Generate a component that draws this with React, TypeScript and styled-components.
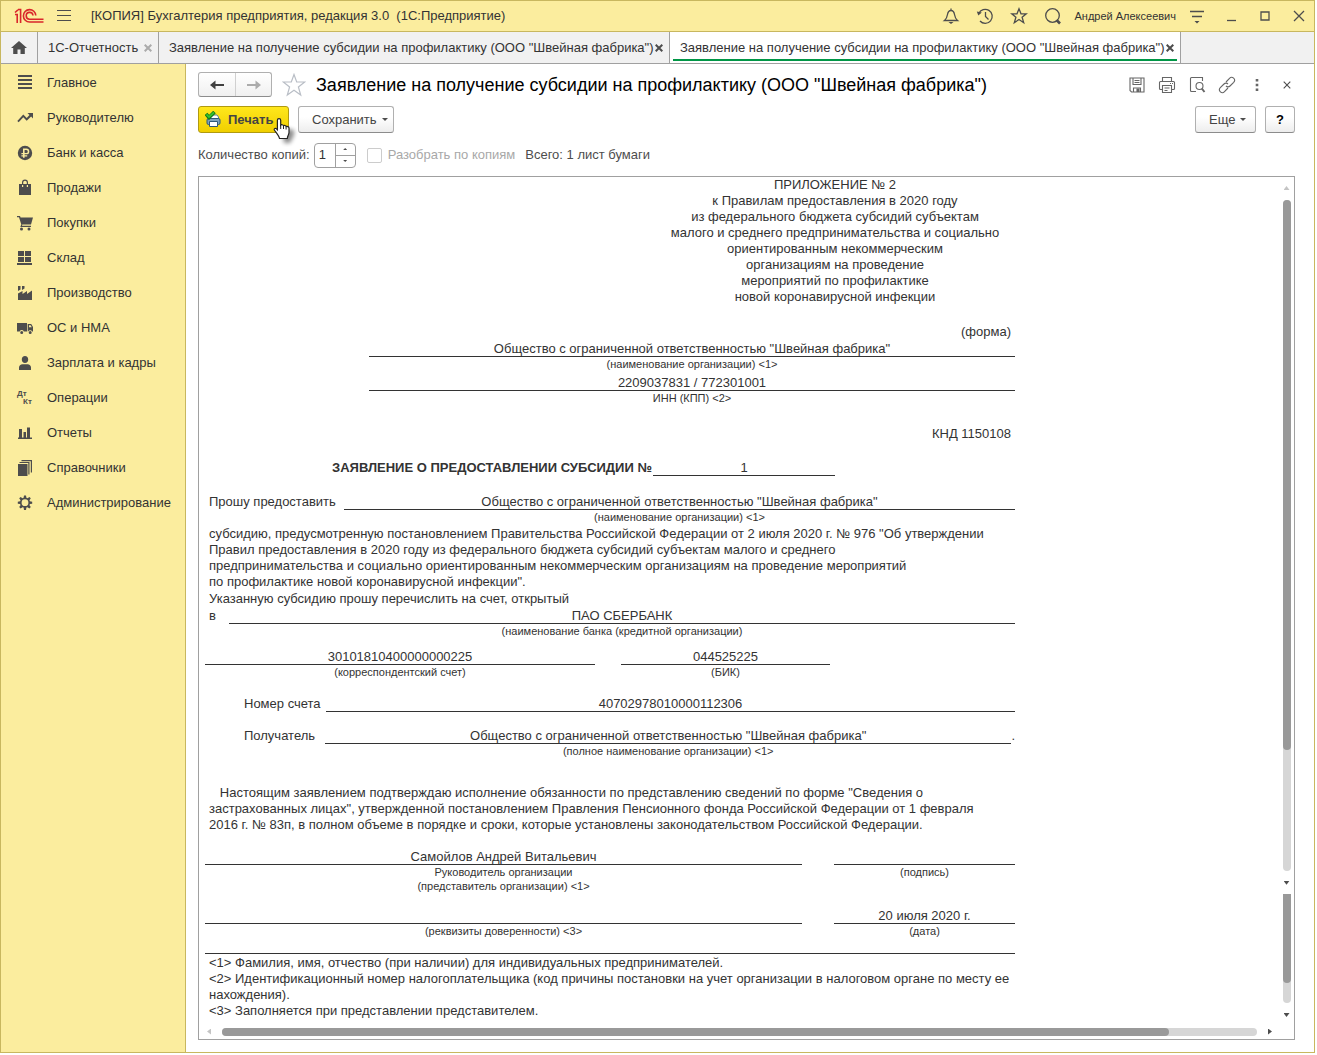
import React from 'react';
import styled, { createGlobalStyle, css } from 'styled-components';

const ink = '#4d4d4d';
const gold = '#c8b75f';
const line = '#a0a0a0';
const dark = '#333333';

const GlobalStyle = createGlobalStyle`
  *, *::before, *::after { box-sizing: border-box; }
  body {
    margin: 0;
    background: #ffffff;
    color: ${dark};
    font: 13px/16px "Liberation Sans", Arial, sans-serif;
  }
  button, input { font: inherit; color: inherit; margin: 0; padding: 0; }
  svg { display: block; flex: none; }
`;

const Window = styled.div`
  display: flex;
  flex-direction: column;
  min-height: calc(100vh - 2px);
  margin: 0 2px 2px 0;
  border: 1px solid ${gold};
`;

const TitleBar = styled.header`
  display: flex;
  align-items: center;
  height: 31px;
  padding: 0 5px 0 13px;
  background: #fbed9e;
  border-bottom: 1px solid ${gold};
`;

const IconButton = styled.button<{ $size?: number }>`
  display: flex;
  align-items: center;
  justify-content: center;
  flex: none;
  width: ${p => p.$size ?? 20}px;
  height: ${p => p.$size ?? 20}px;
  border: 0;
  background: none;
  color: ${ink};
`;

const MenuButton = styled(IconButton)`
  margin-left: 10px;
`;

const AppTitle = styled.div`
  flex: 1;
  margin-left: 17px;
  white-space: pre;
`;

const TitleTools = styled.div`
  display: flex;
  align-items: center;
  gap: 14px;
`;

const UserName = styled.button`
  border: 0;
  background: none;
  font-size: 11px;
  margin-left: -3px;
  margin-right: -3px;
`;

const TabBar = styled.nav`
  display: flex;
  height: 32px;
  background: #f1f1f1;
  border-bottom: 1px solid ${line};
`;

const HomeTab = styled.button`
  display: flex;
  align-items: center;
  justify-content: center;
  width: 37px;
  border: 0;
  border-right: 1px solid ${line};
  background: none;
  color: ${ink};
`;

const Tab = styled.div<{ $active?: boolean; $width: number }>`
  display: flex;
  align-items: center;
  justify-content: space-between;
  flex: 0 0 ${p => p.$width}px;
  padding: 0 6px 0 10px;
  border-right: 1px solid ${line};
  ${p => p.$active && css`
    background: linear-gradient(#009646, #009646) 3px 27px / calc(100% - 6px) 2px no-repeat #ffffff;
  `}
`;

const TabName = styled.button`
  border: 0;
  background: none;
  white-space: nowrap;
`;

const Body = styled.div`
  display: flex;
  flex: 1;
`;

const Sidebar = styled.nav`
  flex: none;
  width: 185px;
  padding-top: 1px;
  background: #fbed9e;
  border-right: 1px solid ${gold};
`;

const Section = styled.a`
  display: flex;
  align-items: center;
  gap: 13px;
  height: 35px;
  padding-left: 15px;
  color: ${dark};
  text-decoration: none;
  svg { color: ${ink}; }
`;

const Page = styled.main`
  display: flex;
  flex-direction: column;
  flex: 1;
  min-width: 0;
  padding: 8px 19px 12px 12px;
`;

const HeadRow = styled.div`
  display: flex;
  align-items: center;
  height: 25px;
`;

const History = styled.div`
  display: flex;
  height: 25px;
  border: 1px solid #b0b0b0;
  border-bottom-color: #8c8c8c;
  border-radius: 3px;
  background: linear-gradient(#ffffff, #f0f0f0);
`;

const HistoryButton = styled.button<{ $off?: boolean }>`
  display: flex;
  align-items: center;
  justify-content: center;
  width: 36px;
  border: 0;
  background: none;
  color: ${p => (p.$off ? '#ababab' : '#404040')};
  & + & { border-left: 1px solid #d0d0d0; }
`;

const StarButton = styled(IconButton)`
  margin-left: 10px;
  width: 24px;
`;

const Heading = styled.h1`
  flex: 1;
  margin: 0 0 0 10px;
  font-size: 18px;
  line-height: 22px;
  font-weight: 400;
  color: #000000;
  white-space: nowrap;
`;

const FormTools = styled.div`
  display: flex;
  gap: 10px;
  margin-right: -2px;
  button { color: #666666; }
`;

const Commands = styled.div`
  display: flex;
  gap: 9px;
  margin-top: 9px;
`;

const Spacer = styled.div`
  flex: 1;
`;

const Button = styled.button<{ $kind?: 'primary' | 'menu'; $width: number }>`
  position: relative;
  display: flex;
  align-items: center;
  justify-content: center;
  width: ${p => p.$width}px;
  height: 27px;
  border: 1px solid #b0b0b0;
  border-bottom-color: #8c8c8c;
  border-radius: 3px;
  background: linear-gradient(#ffffff 40%, #ededed);
  color: #444444;
  b { color: #000000; }
  ${p => p.$kind === 'menu' && css`
    justify-content: flex-start;
    gap: 5px;
    padding-left: 13px;
  `}
  ${p => p.$kind === 'primary' && css`
    justify-content: flex-start;
    gap: 6px;
    padding-left: 6px;
    border-color: #b09a10;
    background: linear-gradient(#ffe71c, #f0cf00);
    font-weight: 700;
  `}
`;

const Caret = styled.span`
  width: 0;
  height: 0;
  border: 3px solid transparent;
  border-top-color: ${ink};
  border-bottom: 0;
`;

const Pointer = styled.svg`
  position: absolute;
  left: 74px;
  top: 10px;
`;

const Options = styled.div`
  display: flex;
  align-items: center;
  height: 26px;
  margin: 9px 0 8px;
  color: ${ink};
`;

const Stepper = styled.div`
  display: flex;
  width: 42px;
  height: 25px;
  margin: 0 11px 0 4px;
  border: 1px solid ${line};
  border-radius: 4px;
  input {
    width: 20px;
    border: 0;
    padding-left: 4px;
    background: none;
    color: ${dark};
    outline: 0;
  }
`;

const StepButtons = styled.div`
  display: flex;
  flex-direction: column;
  flex: 1;
  border-left: 1px solid ${line};
`;

const StepButton = styled.button`
  display: flex;
  align-items: center;
  justify-content: center;
  flex: 1;
  border: 0;
  background: none;
  & + & { border-top: 1px solid ${line}; }
`;

const CheckLabel = styled.label`
  display: flex;
  align-items: center;
  gap: 6px;
  margin-right: 10px;
  color: #a8a8a8;
  input {
    appearance: none;
    width: 15px;
    height: 15px;
    border: 1px solid #cccccc;
    border-radius: 2px;
    background: #ffffff;
  }
`;

const Viewer = styled.section`
  display: grid;
  grid-template-columns: 1fr 15px;
  grid-template-rows: 1fr 19px;
  flex: 1;
  border: 1px solid ${line};
`;

const Sheet = styled.article`
  width: 810px;
  margin-left: 6px;
`;

const Row = styled.div<{ $top?: number; $left?: number; $gap?: number }>`
  display: flex;
  align-items: flex-start;
  gap: ${p => p.$gap ?? 0}px;
  margin-top: ${p => p.$top ?? 0}px;
  padding-left: ${p => p.$left ?? 0}px;
`;

const Appendix = styled.div`
  width: 360px;
  margin-left: auto;
  text-align: center;
`;

const RightText = styled.div<{ $top: number }>`
  margin-top: ${p => p.$top}px;
  padding-right: 4px;
  text-align: right;
`;

const Label = styled.div<{ $width?: number; $bold?: boolean }>`
  flex: none;
  width: ${p => (p.$width ? p.$width + 'px' : 'auto')};
  font-weight: ${p => (p.$bold ? 700 : 400)};
  white-space: nowrap;
`;

const FieldBox = styled.div<{ $width?: number }>`
  flex: ${p => (p.$width ? '0 0 ' + p.$width + 'px' : '1')};
  text-align: center;
`;

const Value = styled.div`
  height: 16px;
  border-bottom: 1px solid ${dark};
  line-height: 16px;
`;

const Caption = styled.div`
  font-size: 11px;
  line-height: 14px;
  white-space: pre-line;
`;

const Para = styled.p<{ $top?: number }>`
  margin: ${p => p.$top ?? 0}px 0 0;
  padding-left: 4px;
  white-space: pre;
`;

const Rule = styled.hr`
  height: 1px;
  margin: 15px 0 1px;
  border: 0;
  background: ${dark};
`;

const VScroll = styled.div`
  display: flex;
  flex-direction: column;
  align-items: center;
  padding: 9px 0 3px;
`;

const Track = styled.div<{ $grow: number; $cut?: boolean }>`
  flex: ${p => p.$grow} 0 0;
  width: 8px;
  border-radius: ${p => (p.$cut ? '0 0 4px 4px' : '4px')};
  background: #d6d6d6;
`;

const Thumb = styled.div<{ $part: number }>`
  height: ${p => p.$part}%;
  border-radius: inherit;
  background: #999999;
`;

const HScroll = styled.div`
  display: flex;
  align-items: center;
  gap: 11px;
  padding: 4px 7px 0 8px;
`;

const HTrack = styled.div`
  flex: 1;
  height: 8px;
  border-radius: 4px;
  background: #d6d6d6;
`;

const HThumb = styled.div`
  width: 91.5%;
  height: 8px;
  border-radius: 4px;
  background: #999999;
`;

const Arrow = styled.span<{ $dir: 'up' | 'down' | 'left' | 'right'; $off?: boolean; $small?: boolean; $gap?: string }>`
  flex: none;
  width: ${p => (p.$small ? 4 : 6)}px;
  height: ${p => (p.$small ? 2 : 4)}px;
  margin: ${p => p.$gap ?? '0'};
  background: ${p => (p.$off ? '#c4c4c4' : ink)};
  ${p => p.$dir === 'up' && css`clip-path: polygon(50% 0, 100% 100%, 0 100%);`}
  ${p => p.$dir === 'down' && css`clip-path: polygon(0 0, 100% 0, 50% 100%);`}
  ${p => (p.$dir === 'left' || p.$dir === 'right') && css`width: 4px; height: 6px;`}
  ${p => p.$dir === 'left' && css`clip-path: polygon(100% 0, 100% 100%, 0 50%);`}
  ${p => p.$dir === 'right' && css`clip-path: polygon(0 0, 100% 50%, 0 100%);`}
`;

function Field({ value, caption, width }: { value: string; caption?: string; width?: number }) {
  return (
    <FieldBox $width={width}>
      <Value>{value}</Value>
      {caption && <Caption>{caption}</Caption>}
    </FieldBox>
  );
}

function Stroke({ size = 18, width = 1.3, children }: { size?: number; width?: number; children: React.ReactNode }) {
  return (
    <svg width={size} height={size} viewBox="0 0 18 18" fill="none" stroke="currentColor" strokeWidth={width}>
      {children}
    </svg>
  );
}

function Cross({ color = ink, size = 8, width = 2 }: { color?: string; size?: number; width?: number }) {
  return (
    <svg width={size} height={size} viewBox="0 0 8 8" stroke={color} strokeWidth={width}>
      <path d="M.7.7l6.6 6.6M7.3.7L.7 7.3" />
    </svg>
  );
}

function Logo() {
  return (
    <svg width="30" height="16" viewBox="0 0 30 16" fill="none" stroke="#d9262b" strokeWidth="1.6">
      <path d="M1 4.500L4 1.800M1 6.500h2.200V15M4 1.500h2.600V15" />
      <path d="M21.800 7.500A6.200 6.200 0 1 0 15.600 14H29.500" />
      <path d="M19 7.500a3.400 3.400 0 1 0-3.400 3.700H29.500" />
    </svg>
  );
}

function MenuGlyph() {
  return (
    <svg width="14" height="12" viewBox="0 0 14 12" fill={ink}>
      <path d="M0 0h14v1H0zM0 5h14v1H0zM0 10h14v1H0z" />
    </svg>
  );
}

function PrinterGlyph() {
  return (
    <svg width="17" height="17" viewBox="0 0 17 17">
      <path d="M5 4h7l1.500 2v2H5z" fill="#fff" stroke="#5c7f9c" />
      <rect x="2" y="7.500" width="13" height="6" rx="1.500" fill="#7fa3bd" stroke="#2f5878" />
      <path d="M4.500 10.500h8v5h-8z" fill="#fff" stroke="#2f5878" />
      <path d="M1 3l3 3.500L9.500 1" fill="none" stroke="#12771a" strokeWidth="3.600" />
      <path d="M1.500 3.300L4 6l5-4.700" fill="none" stroke="#35c52f" strokeWidth="1.800" />
    </svg>
  );
}

const sections: { name: string; icon: React.ReactNode }[] = [
  { name: 'Главное', icon: <path d="M2 1h14v2H2zM2 5h14v2H2zM2 9h14v2H2zM2 13h14v2H2z" /> },
  {
    name: 'Руководителю',
    icon: <path d="M11.5 4H17v5.5l-1.9-1.9-4.4 4.2-3.4-3.5-4.6 5-1.4-1.4 6-6.4 3.4 3.4 2.8-2.9z" />,
  },
  {
    name: 'Банк и касса',
    icon: (
      <path
        fillRule="evenodd"
        d="M9 1.8a7.2 7.2 0 1 0 0 14.400 7.200 7.200 0 0 0 0-14.400zM7 4.500h3.400a2.900 2.900 0 0 1 0 5.800H8.600v.9h2.600v1.300H8.600v1.300H7v-1.300H5.400v-1.300H7v-.9H5.400V8.900H7zM8.600 5.900v3h1.700a1.500 1.500 0 0 0 0-3z"
      />
    ),
  },
  {
    name: 'Продажи',
    icon: <path fillRule="evenodd" d="M3 5h3V3.500a3 3 0 0 1 6 0V5h3v11H3zM7.200 5h3.600V3.600a1.800 1.800 0 0 0-3.600 0zM6 6v2h1.200V6zM10.800 6v2H12V6z" />,
  },
  {
    name: 'Покупки',
    icon: <path d="M1 2h3l.6 1.500H17L15 10.500H6.300l-.3 1.200h9V13H4.300l1-2.500L3 3.300H1zM5.500 13.500a1.500 1.500 0 1 1 0 3 1.500 1.500 0 0 1 0-3zM13 13.500a1.500 1.500 0 1 1 0 3 1.500 1.500 0 0 1 0-3z" />,
  },
  { name: 'Склад', icon: <path d="M2 2h6v5H2zM9 2h6v5H9zM2 8h6v5H2zM9 8h6v5H9zM1 14h15v2H1z" /> },
  { name: 'Производство', icon: <path d="M2 9.500L6.500 7v3L11 7v3l5-3.500V16H2zM2 2h2.500v3.500L2 7zM6 2h2.500v2.500L6 6z" /> },
  {
    name: 'ОС и НМА',
    icon: <path fillRule="evenodd" d="M1 4h10v8.500H7.800a2.200 2.200 0 0 0-4.100 0H1zM11.700 5h3.500L17 8v4.500h-.8a2.200 2.200 0 0 0-4 0h-.5zM13 6.200v2h2.800l-1.200-2zM5.700 12a1.500 1.500 0 1 1 0 3 1.500 1.500 0 0 1 0-3zM14.200 12a1.500 1.500 0 1 1 0 3 1.500 1.500 0 0 1 0-3z" />,
  },
  {
    name: 'Зарплата и кадры',
    icon: <path d="M9 2c2 0 3.200 1.500 3.200 3.500S11 9 9 9 5.800 7.500 5.800 5.500 7 2 9 2zM3 16v-2.500c0-2 1.500-3 3.500-3.300h5c2 .3 3.500 1.300 3.500 3.300V16z" />,
  },
  {
    name: 'Операции',
    icon: (
      <g fontFamily="Liberation Sans" fontWeight="700" fontSize="8">
        <text x="1" y="7">Дт</text>
        <text x="7" y="15">Кт</text>
      </g>
    ),
  },
  { name: 'Отчеты', icon: <path d="M2 13.500h14V15H2zM3 5h3v9H3zM7.500 8h2.500v6H7.500zM11 3.500h3V14h-3z" /> },
  {
    name: 'Справочники',
    icon: <path d="M2 5h9.500v12H2zM3.500 3h10v12.500h-1.200V4H3.500zM5.500 1H16v12.500h-1.200V2.200H5.500z" />,
  },
  {
    name: 'Администрирование',
    icon: (
      <path
        fillRule="evenodd"
        d="M8 1.500h2l.4 2.300 1.100.4 1.900-1.300 1.400 1.400-1.300 1.900.4 1.100 2.300.4v2l-2.300.4-.4 1.100 1.300 1.900-1.400 1.400-1.900-1.300-1.100.4-.4 2.300H8l-.4-2.300-1.100-.4-1.900 1.300-1.400-1.400 1.300-1.900-.4-1.100-2.300-.4v-2l2.300-.4.4-1.100-1.300-1.900 1.400-1.400 1.900 1.300 1.100-.4zM9 5.300a3.400 3.400 0 1 0 0 6.800 3.400 3.400 0 0 0 0-6.800z"
      />
    ),
  },
];

const docTab = 'Заявление на получение субсидии на профилактику (ООО "Швейная фабрика")';
const company = 'Общество с ограниченной ответственностью "Швейная фабрика"';

function Title() {
  return (
    <TitleBar>
      <Logo />
      <MenuButton $size={20} aria-label="Меню">
        <MenuGlyph />
      </MenuButton>
      <AppTitle>{'[КОПИЯ] Бухгалтерия предприятия, редакция 3.0  (1С:Предприятие)'}</AppTitle>
      <TitleTools>
        <IconButton aria-label="Уведомления">
          <Stroke><path d="M2.500 13.500h13c-2-1.500-2.500-3-3-6C12 4.500 11 3.500 9 3.500s-3 1-3.500 4c-.5 3-1 4.500-3 6zM9 1.500v2" /><path d="M6.500 15h5L9 17z" fill="currentColor" stroke="none" /></Stroke>
        </IconButton>
        <IconButton aria-label="История">
          <Stroke><path d="M2.800 6.500A7 7 0 1 1 4 14M9.500 5v4.500l3 3" /><path d="M.8 4.500l5 1-3.500 3z" fill="currentColor" stroke="none" /></Stroke>
        </IconButton>
        <IconButton aria-label="Избранное">
          <Stroke><path d="M9 1.800l2 5h5.300l-4.200 3.400 1.600 5.500L9 12.500l-4.700 3.200 1.600-5.500L1.700 6.800H7z" /></Stroke>
        </IconButton>
        <IconButton aria-label="Поиск">
          <Stroke><circle cx="8.500" cy="8.500" r="6.800" /><path d="M12.500 13l3.500 3.500" strokeWidth="2.600" /></Stroke>
        </IconButton>
        <UserName>Андрей Алексеевич</UserName>
        <IconButton aria-label="Настройки">
          <Stroke><path d="M2 4.500h14M4 9.500h10" /><path d="M6.500 14h5L9 16.500z" fill="currentColor" stroke="none" /></Stroke>
        </IconButton>
        <IconButton aria-label="Свернуть">
          <Stroke><path d="M5 13.500h9" /></Stroke>
        </IconButton>
        <IconButton aria-label="Развернуть">
          <Stroke><path d="M5 5h8v8H5z" /></Stroke>
        </IconButton>
        <IconButton aria-label="Закрыть">
          <Stroke><path d="M4 4l10 10M14 4L4 14" /></Stroke>
        </IconButton>
      </TitleTools>
    </TitleBar>
  );
}

function App() {
  return (
    <>
      <GlobalStyle />
      <Window>
        <Title />
        <TabBar>
          <HomeTab aria-label="Начальная страница">
            <svg width="16" height="14" viewBox="0 0 16 14" fill="currentColor">
              <path d="M8 0l8 7h-2.200v6H9.500V8.500h-3V13H2.200V7H0z" />
            </svg>
          </HomeTab>
          <Tab $width={121}>
            <TabName>1С-Отчетность</TabName>
            <IconButton $size={8} aria-label="Закрыть вкладку"><Cross color="#ababab" /></IconButton>
          </Tab>
          <Tab $width={511}>
            <TabName>{docTab}</TabName>
            <IconButton $size={8} aria-label="Закрыть вкладку"><Cross /></IconButton>
          </Tab>
          <Tab $width={511} $active>
            <TabName>{docTab}</TabName>
            <IconButton $size={8} aria-label="Закрыть вкладку"><Cross /></IconButton>
          </Tab>
        </TabBar>
        <Body>
          <Sidebar>
            {sections.map(s => (
              <Section href="#" key={s.name}>
                <svg width="18" height="18" viewBox="0 0 18 18" fill="currentColor">{s.icon}</svg>
                {s.name}
              </Section>
            ))}
          </Sidebar>
          <Page>
            <HeadRow>
              <History>
                <HistoryButton aria-label="Назад">
                  <svg width="14" height="10" viewBox="0 0 14 10" fill="currentColor"><path d="M0 5l5.500-4.500V4H14v2H5.500v3.500z" /></svg>
                </HistoryButton>
                <HistoryButton $off aria-label="Вперед">
                  <svg width="14" height="10" viewBox="0 0 14 10" fill="currentColor"><path d="M14 5L8.500.5V4H0v2h8.500v3.500z" /></svg>
                </HistoryButton>
              </History>
              <StarButton aria-label="В избранное">
                <svg width="24" height="24" viewBox="0 0 24 24" fill="none" stroke="#b9bec6" strokeWidth="1.200">
                  <path d="M12 1.500l2.700 7.500h8l-6.300 5 2.300 8L12 17.300 5.300 22l2.300-8-6.300-5h8z" />
                </svg>
              </StarButton>
              <Heading>{docTab}</Heading>
              <FormTools>
                <IconButton aria-label="Сохранить файл">
                  <Stroke width={1.1}><path d="M2 2h14v14H3.500L2 14.500zM5 2v6.500h8V2M6.500 4.500h5M6.500 6.500h5M5.500 16v-4h7v4" /><path d="M9 13h2v2.500H9z" fill="currentColor" /></Stroke>
                </IconButton>
                <IconButton aria-label="Печать">
                  <Stroke width={1.1}><path d="M4.500 5.500v-4h9v4M4.500 13.500h-2a1 1 0 0 1-1-1v-6a1 1 0 0 1 1-1h13a1 1 0 0 1 1 1v6a1 1 0 0 1-1 1h-2M4.500 9.500h9v7h-9zM6.500 12h5M6.500 14.500h3M12 7.500h1M14 7.500h1" /></Stroke>
                </IconButton>
                <IconButton aria-label="Просмотр">
                  <Stroke width={1.1}><path d="M8 15.500H3.500a1 1 0 0 1-1-1v-12a1 1 0 0 1 1-1h11V5" /><circle cx="11.500" cy="10" r="3.500" /><path d="M13.800 12.500l2.700 3.500" strokeWidth="2" /></Stroke>
                </IconButton>
                <IconButton aria-label="Ссылка">
                  <Stroke width={1.1}><path d="M8 6l3.500-3.700a2.800 2.800 0 0 1 4.200 4L12 10a2.800 2.800 0 0 1-4 0M10 12l-3.500 3.700a2.800 2.800 0 0 1-4.200-4L6 8a2.800 2.800 0 0 1 4 0" /></Stroke>
                </IconButton>
                <IconButton aria-label="Дополнительно">
                  <Stroke><path d="M9 3v2.600M9 7.700v2.600M9 12.400V15" strokeWidth="2.600" /></Stroke>
                </IconButton>
                <IconButton aria-label="Закрыть форму"><Cross width={1.1} /></IconButton>
              </FormTools>
            </HeadRow>
            <Commands>
              <Button $kind="primary" $width={91}>
                <PrinterGlyph />
                Печать
                <Pointer width="26" height="30" viewBox="0 0 26 30">
                  <defs>
                    <filter id="shade" x="-40%" y="-40%" width="180%" height="180%"><feGaussianBlur stdDeviation="2" /></filter>
                  </defs>
                  <path d="M9 11l12 2v5l-4 8h-6z" fill="#000" opacity=".45" filter="url(#shade)" />
                  <path
                    d="M6 1.700c1 0 1.700.6 1.700 1.500v5c.6-.8 2.500-.6 2.800.5.800-.6 2.300-.3 2.600.8 1-.4 2.900.2 2.900 1.500v4.500c0 2-1.500 3.500-1.700 6H6.500C6 19 3 15.500 1.300 13c-.6-1.400 1.200-2.200 2.200-1.200l.9.900V3.200c0-.9.6-1.500 1.600-1.500z"
                    fill="#fff" stroke="#222" strokeWidth="1.200"
                  />
                  <path d="M7.700 8v4M10.500 9v3M13.100 10v2.500" stroke="#222" />
                </Pointer>
              </Button>
              <Button $kind="menu" $width={96}>Сохранить <Caret /></Button>
              <Spacer />
              <Button $kind="menu" $width={61}>Еще <Caret /></Button>
              <Button $width={30} aria-label="Справка"><b>?</b></Button>
            </Commands>
            <Options>
              <label htmlFor="copies">Количество копий:</label>
              <Stepper>
                <input id="copies" defaultValue="1" />
                <StepButtons>
                  <StepButton aria-label="Больше"><Arrow $dir="up" $small /></StepButton>
                  <StepButton aria-label="Меньше"><Arrow $dir="down" $small /></StepButton>
                </StepButtons>
              </Stepper>
              <CheckLabel><input type="checkbox" disabled />Разобрать по копиям</CheckLabel>
              <span>Всего: 1 лист бумаги</span>
            </Options>
            <Viewer>
              <Sheet>
                <Appendix>
                  ПРИЛОЖЕНИЕ № 2<br />
                  к Правилам предоставления в 2020 году<br />
                  из федерального бюджета субсидий субъектам<br />
                  малого и среднего предпринимательства и социально<br />
                  ориентированным некоммерческим<br />
                  организациям на проведение<br />
                  мероприятий по профилактике<br />
                  новой коронавирусной инфекции
                </Appendix>
                <RightText $top={19}>(форма)</RightText>
                <Row $top={1} $left={164}><Field value={company} caption="(наименование организации) <1>" /></Row>
                <Row $top={4} $left={164}><Field value="2209037831 / 772301001" caption="ИНН (КПП) <2>" /></Row>
                <RightText $top={21}>КНД 1150108</RightText>
                <Row $top={18} $left={127}>
                  <Label $width={321} $bold>ЗАЯВЛЕНИЕ О ПРЕДОСТАВЛЕНИИ СУБСИДИИ №</Label>
                  <Field width={182} value="1" />
                </Row>
                <Row $top={18} $left={4}>
                  <Label $width={135}>Прошу предоставить</Label>
                  <Field value={company} caption="(наименование организации) <1>" />
                </Row>
                <Para $top={2}>
                  {`субсидию, предусмотренную постановлением Правительства Российской Федерации от 2 июля 2020 г. № 976 "Об утверждении
Правил предоставления в 2020 году из федерального бюджета субсидий субъектам малого и среднего
предпринимательства и социально ориентированным некоммерческим организациям на проведение мероприятий
по профилактике новой коронавирусной инфекции".`}
                </Para>
                <Para $top={1}>Указанную субсидию прошу перечислить на счет, открытый</Para>
                <Row $top={1} $left={4}>
                  <Label $width={20}>в</Label>
                  <Field value="ПАО СБЕРБАНК" caption="(наименование банка (кредитной организации)" />
                </Row>
                <Row $top={11} $gap={26}>
                  <Field width={390} value="30101810400000000225" caption="(корреспондентский счет)" />
                  <Field width={209} value="044525225" caption="(БИК)" />
                </Row>
                <Row $top={17} $left={39}>
                  <Label $width={82}>Номер счета</Label>
                  <Field value="40702978010000112306" />
                </Row>
                <Row $top={16} $left={39}>
                  <Label $width={81}>Получатель</Label>
                  <Field value={company} caption="(полное наименование организации) <1>" />
                  <Label>.</Label>
                </Row>
                <Para $top={27}>
                  {`   Настоящим заявлением подтверждаю исполнение обязанности по представлению сведений по форме "Сведения о
застрахованных лицах", утвержденной постановлением Правления Пенсионного фонда Российской Федерации от 1 февраля
2016 г. № 83п, в полном объеме в порядке и сроки, которые установлены законодательством Российской Федерации.`}
                </Para>
                <Row $top={16} $gap={32}>
                  <Field value="Самойлов Андрей Витальевич" caption={'Руководитель организации\n(представитель организации) <1>'} />
                  <Field width={181} value="" caption="(подпись)" />
                </Row>
                <Row $top={15} $gap={32}>
                  <Field value="" caption="(реквизиты доверенности) <3>" />
                  <Field width={181} value="20 июля 2020 г." caption="(дата)" />
                </Row>
                <Rule />
                <Para>
                  {`<1> Фамилия, имя, отчество (при наличии) для индивидуальных предпринимателей.
<2> Идентификационный номер налогоплательщика (код причины постановки на учет организации в налоговом органе по месту ее
нахождения).
<3> Заполняется при представлении представителем.`}
                </Para>
              </Sheet>
              <VScroll>
                <Arrow $dir="up" $off $gap="0 0 10px" />
                <Track $grow={670}><Thumb $part={82} /></Track>
                <Arrow $dir="down" $gap="10px 0 9px" />
                <Track $grow={109} $cut><Thumb $part={82} /></Track>
                <Arrow $dir="down" $gap="10px 0 0" />
              </VScroll>
              <HScroll>
                <Arrow $dir="left" $off />
                <HTrack><HThumb /></HTrack>
                <Arrow $dir="right" />
              </HScroll>
            </Viewer>
          </Page>
        </Body>
      </Window>
    </>
  );
}

export default App;
